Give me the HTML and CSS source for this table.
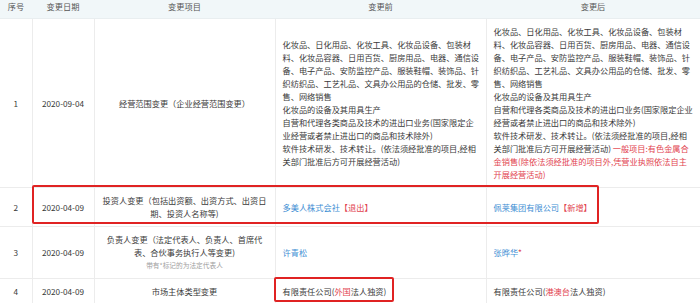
FILE: index.html
```html
<!DOCTYPE html>
<html lang="zh">
<head>
<meta charset="utf-8">
<title>变更记录</title>
<link rel="stylesheet" href="styles.css">
</head>
<body>
<div class="wrap">
  <table class="tbl">
    <colgroup>
      <col class="c1"><col class="c2"><col class="c3"><col class="c4"><col class="c5">
    </colgroup>
    <thead>
      <tr><th>序号</th><th>变更日期</th><th>变更项目</th><th>变更前</th><th>变更后</th></tr>
    </thead>
    <tbody>
      <tr>
        <td class="ctr">1</td>
        <td class="ctr">2020-09-04</td>
        <td class="ctr">经营范围变更（企业经营范围变更）</td>
        <td class="txt">化妆品、日化用品、化妆工具、化妆品设备、包装材料、化妆品容器、日用百货、厨房用品、电器、通信设备、电子产品、安防监控产品、服装鞋帽、装饰品、针织纺织品、工艺礼品、文具办公用品的仓储、批发、零售、网络销售<br>化妆品的设备及其用具生产<br>自营和代理各类商品及技术的进出口业务(国家限定企业经营或者禁止进出口的商品和技术除外)<br>软件技术研发、技术转让。(依法须经批准的项目,经相关部门批准后方可开展经营活动)</td>
        <td class="txt">化妆品、日化用品、化妆工具、化妆品设备、包装材料、化妆品容器、日用百货、厨房用品、电器、通信设备、电子产品、安防监控产品、服装鞋帽、装饰品、针织纺织品、工艺礼品、文具办公用品的仓储、批发、零售、网络销售<br>化妆品的设备及其用具生产<br>自营和代理各类商品及技术的进出口业务(国家限定企业经营或者禁止进出口的商品和技术除外)<br>软件技术研发、技术转让。(依法须经批准的项目,经相关部门批准后方可开展经营活动) <span class="red">一般项目:有色金属合金销售(除依法须经批准的项目外,凭营业执照依法自主开展经营活动)</span></td>
      </tr>
      <tr>
        <td class="ctr">2</td>
        <td class="ctr">2020-04-09</td>
        <td class="ctr">投资人变更（包括出资额、出资方式、出资日期、投资人名称等)</td>
        <td class="txt"><span class="blue">多美人株式会社</span><span class="red">【退出】</span></td>
        <td class="txt"><span class="blue">佩莱集团有限公司</span><span class="red">【新增】</span></td>
      </tr>
      <tr>
        <td class="ctr">3</td>
        <td class="ctr">2020-04-09</td>
        <td class="ctr">负责人变更（法定代表人、负责人、首席代表、合伙事务执行人等变更)<div class="note">带有*标记的为法定代表人</div></td>
        <td class="txt"><span class="blue">许青松</span></td>
        <td class="txt"><span class="blue">张晔华</span><span class="red">*</span></td>
      </tr>
      <tr>
        <td class="ctr">4</td>
        <td class="ctr">2020-04-09</td>
        <td class="ctr">市场主体类型变更</td>
        <td class="txt">有限责任公司(<span class="red">外国</span>法人独资)</td>
        <td class="txt">有限责任公司(<span class="red">港澳台</span>法人独资)</td>
      </tr>
    </tbody>
  </table>
  <div class="mark mark-a"></div>
  <div class="mark mark-b"></div>
</div>
</body>
</html>
```

FILE: styles.css
```css
* { box-sizing: border-box; }
html, body { margin: 0; padding: 0; background: #fff; }
body {
  font-family: "Noto Sans CJK SC", "Noto Sans", sans-serif;
  font-size: 8.2px;
  line-height: 13px;
  color: #3a3a3a;
}
.wrap { position: relative; width: 700px; }
.tbl {
  width: 700px;
  border-collapse: collapse;
  table-layout: fixed;
}
.c1 { width: 32px; }
.c2 { width: 62px; }
.c3 { width: 181px; }
.c4 { width: 211px; }
.c5 { width: 214px; }
.tbl th {
  background: #f1f7f9;
  color: #555;
  font-weight: normal;
  text-align: center;
  padding: 0 0 5px;
  height: 18px;
  border: 0;
  border-bottom: 1px solid #e9eef0;
}
.tbl td {
  border: 1px solid #ececec;
  padding: 6px 6px 6px 7px;
  vertical-align: middle;
}
.tbl tr td:first-child { border-left: 0; }
.tbl tr td:last-child { border-right: 0; }
.tbl td.ctr { text-align: center; padding-left: 5px; padding-right: 5px; }
.tbl td.txt { text-align: left; }
.blue { color: #3f8fd4; }
.red { color: #e2444f; }
.note { font-size: 6.7px; color: #a0a0a0; }
.mark {
  position: absolute;
  border: 2px solid #e02323;
  border-radius: 2px;
}
.mark-a { left: 32px; top: 185px; width: 567px; height: 39px; }
.mark-b { left: 274px; top: 277px; width: 120px; height: 25px; }
```
